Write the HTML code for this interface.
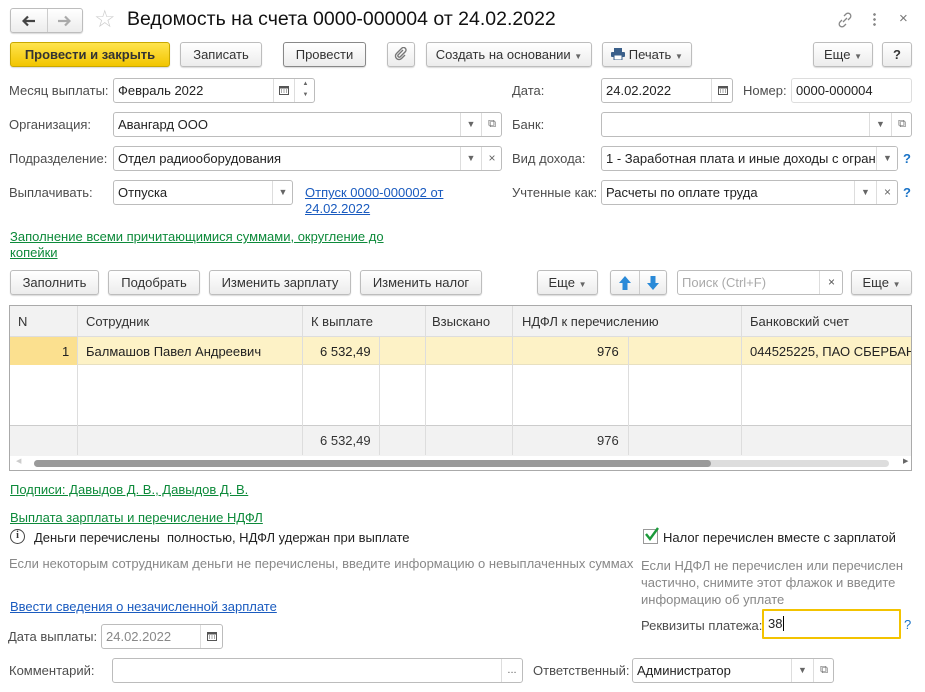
<!DOCTYPE html>
<html><head><meta charset="utf-8"><style>
*{box-sizing:border-box}
body{margin:0;width:925px;height:692px;background:#fff;font-family:"Liberation Sans",Arial,sans-serif;font-size:13px;color:#333;position:relative;overflow:hidden}
.a{position:absolute;white-space:nowrap}
.btn{position:absolute;height:25px;border:1px solid #bdbdbd;border-radius:3px;background:linear-gradient(#fff,#ececec);box-shadow:0 1px 1px rgba(0,0,0,.15);text-align:center;line-height:23px;color:#333;white-space:nowrap}
.inp{position:absolute;height:25px;border:1px solid #bcbcbc;border-radius:3px;background:#fff;line-height:23px;padding-left:4px;color:#222;white-space:nowrap;overflow:hidden}
.sb{position:absolute;top:0;bottom:0;border-left:1px solid #ddd;text-align:center;color:#666;font-size:9px;line-height:23px}
.sb svg{vertical-align:middle;margin-top:-2px}
.lbl{position:absolute;color:#4d4d4d;white-space:nowrap}
.q{position:absolute;color:#1a73c7;font-weight:bold}
.lnkg{position:absolute;color:#0d8a3a;text-decoration:underline;white-space:nowrap}
.lnkb{position:absolute;color:#1a5bbf;text-decoration:underline;white-space:nowrap}
.col{position:absolute;top:0;bottom:0;border-left:1px solid #ddd}
</style></head><body>
<!-- title bar -->
<div class="btn" style="left:10px;top:8px;width:73px;height:25px;padding:0">
<svg class="a" style="left:11px;top:6px" width="14" height="12" viewBox="0 0 14 12"><path d="M1 6h12M6 1.5L1.5 6 6 10.5" stroke="#444" stroke-width="2.2" fill="none"/></svg>
<span style="position:absolute;left:36px;top:0;bottom:0;border-left:1px solid #ccc"></span>
<svg class="a" style="left:46px;top:6px" width="14" height="12" viewBox="0 0 14 12"><path d="M1 6h12M8 1.5L12.5 6 8 10.5" stroke="#aaa" stroke-width="2.2" fill="none"/></svg>
</div>
<div class="a" style="left:94px;top:5px;font-size:24px;color:#ccc">☆</div>
<div class="a" style="left:127px;top:8px;font-size:19.5px;color:#111">Ведомость на счета 0000-000004 от 24.02.2022</div>
<svg class="a" style="left:836px;top:11px" width="18" height="18" viewBox="0 0 18 18" fill="none" stroke="#888" stroke-width="1.3"><path d="M7 11l4-4M8 5l2-2a2.8 2.8 0 014 4l-2 2M10 13l-2 2a2.8 2.8 0 01-4-4l2-2"/></svg>
<div class="a" style="left:873px;top:12px;width:3px;height:14px;background:radial-gradient(circle,#888 1.2px,transparent 1.5px) 0 0/3px 5px"></div>
<div class="a" style="left:899px;top:10px;font-size:15px;color:#777">×</div>
<!-- toolbar -->
<div class="btn" style="left:10px;top:42px;width:160px;background:linear-gradient(#ffe44d,#f2c500);border-color:#c9a800;font-weight:bold;color:#333">Провести и закрыть</div>
<div class="btn" style="left:180px;top:42px;width:82px">Записать</div>
<div class="btn" style="left:283px;top:42px;width:83px;border-color:#888">Провести</div>
<div class="btn" style="left:387px;top:42px;width:28px"><svg style="vertical-align:middle;margin-top:-3px" width="14" height="14" viewBox="0 0 14 14"><path d="M9 3L4 8a1.5 1.5 0 002 2l5.5-5.5a2.5 2.5 0 00-3.5-3.5L2.5 6.5a3.5 3.5 0 005 5L11 8" stroke="#777" stroke-width="1.4" fill="none"/></svg></div>
<div class="btn" style="left:426px;top:42px;width:166px">Создать на основании <span style="font-size:8px;color:#666">▼</span></div>
<div class="btn" style="left:602px;top:42px;width:90px"><svg style="vertical-align:middle;margin-top:-3px" width="14" height="12" viewBox="0 0 14 12"><rect x="3" y="0" width="8" height="4" fill="#3a5f8a"/><rect x="0" y="4" width="14" height="5" rx="1" fill="#3a5f8a"/><rect x="3" y="7" width="8" height="5" fill="#fff" stroke="#3a5f8a"/></svg> Печать <span style="font-size:8px;color:#666">▼</span></div>
<div class="btn" style="left:813px;top:42px;width:60px">Еще <span style="font-size:8px;color:#666">▼</span></div>
<div class="btn" style="left:882px;top:42px;width:30px;font-weight:bold">?</div>
<!-- row1 -->
<div class="lbl" style="left:9px;top:83px">Месяц выплаты:</div>
<div class="inp" style="left:113px;top:78px;width:202px">Февраль 2022<div class="sb" style="left:159px;width:21px"><svg width="10" height="10" viewBox="0 0 10 10"><rect x="0.5" y="1.5" width="9" height="8" fill="none" stroke="#555"/><rect x="0.5" y="1.5" width="9" height="2" fill="#555"/><path d="M2 5h1M4.5 5h1M7 5h1M2 7h1M4.5 7h1M7 7h1" stroke="#555"/></svg></div><div class="sb" style="left:180px;width:22px;line-height:11px;font-size:6px">▲<br>▼</div></div>
<div class="lbl" style="left:512px;top:83px">Дата:</div>
<div class="inp" style="left:601px;top:78px;width:132px">24.02.2022<div class="sb" style="left:109px;width:22px"><svg width="10" height="10" viewBox="0 0 10 10"><rect x="0.5" y="1.5" width="9" height="8" fill="none" stroke="#555"/><rect x="0.5" y="1.5" width="9" height="2" fill="#555"/><path d="M2 5h1M4.5 5h1M7 5h1M2 7h1M4.5 7h1M7 7h1" stroke="#555"/></svg></div></div>
<div class="lbl" style="left:743px;top:83px">Номер:</div>
<div class="inp" style="left:791px;top:78px;width:121px;border-color:#ddd">0000-000004</div>
<!-- row2 -->
<div class="lbl" style="left:9px;top:117px">Организация:</div>
<div class="inp" style="left:113px;top:112px;width:389px">Авангард ООО<div class="sb" style="left:346px;width:21px">▼</div><div class="sb" style="left:367px;width:21px;font-size:11px">⧉</div></div>
<div class="lbl" style="left:512px;top:117px">Банк:</div>
<div class="inp" style="left:601px;top:112px;width:311px"><div class="sb" style="left:267px;width:22px">▼</div><div class="sb" style="left:289px;width:21px;font-size:11px">⧉</div></div>
<!-- row3 -->
<div class="lbl" style="left:9px;top:151px">Подразделение:</div>
<div class="inp" style="left:113px;top:146px;width:389px">Отдел радиооборудования<div class="sb" style="left:346px;width:21px">▼</div><div class="sb" style="left:367px;width:21px;font-size:12px">×</div></div>
<div class="lbl" style="left:512px;top:151px">Вид дохода:</div>
<div class="inp" style="left:601px;top:146px;width:297px">1 - Заработная плата и иные доходы с огран<div class="sb" style="left:274px;width:22px;background:#fff">▼</div></div>
<div class="q" style="left:903px;top:151px">?</div>
<!-- row4 -->
<div class="lbl" style="left:9px;top:185px">Выплачивать:</div>
<div class="inp" style="left:113px;top:180px;width:180px">Отпуска<div class="sb" style="left:158px;width:21px">▼</div></div>
<div class="lnkb" style="left:305px;top:185px;line-height:16px">Отпуск 0000-000002 от<br>24.02.2022</div>
<div class="lbl" style="left:512px;top:185px">Учтенные как:</div>
<div class="inp" style="left:601px;top:180px;width:297px">Расчеты по оплате труда<div class="sb" style="left:252px;width:22px">▼</div><div class="sb" style="left:274px;width:22px;font-size:12px">×</div></div>
<div class="q" style="left:903px;top:185px">?</div>
<div class="lnkg" style="left:10px;top:229px;line-height:16px">Заполнение всеми причитающимися суммами, округление до<br>копейки</div>
<!-- table toolbar -->
<div class="btn" style="left:10px;top:270px;width:89px">Заполнить</div>
<div class="btn" style="left:108px;top:270px;width:92px">Подобрать</div>
<div class="btn" style="left:209px;top:270px;width:142px">Изменить зарплату</div>
<div class="btn" style="left:360px;top:270px;width:122px">Изменить налог</div>
<div class="btn" style="left:537px;top:270px;width:61px">Еще <span style="font-size:8px;color:#666">▼</span></div>
<div class="btn" style="left:610px;top:270px;width:57px;padding:0">
<svg class="a" style="left:8px;top:5px" width="12" height="14" viewBox="0 0 12 14"><path d="M6 0L12 7H8.5V14h-5V7H0z" fill="#2a8ad8"/></svg>
<span style="position:absolute;left:28px;top:0;bottom:0;border-left:1px solid #ccc"></span>
<svg class="a" style="left:36px;top:5px" width="12" height="14" viewBox="0 0 12 14"><path d="M6 14L12 7H8.5V0h-5V7H0z" fill="#2a8ad8"/></svg>
</div>
<div class="inp" style="left:677px;top:270px;width:166px;color:#aaa">Поиск (Ctrl+F)<div class="sb" style="left:141px;width:24px;font-size:12px;color:#555">×</div></div>
<div class="btn" style="left:851px;top:270px;width:61px">Еще <span style="font-size:8px;color:#666">▼</span></div>
<!-- table -->
<div class="a" style="left:9px;top:305px;width:903px;height:166px;border:1px solid #aaa;overflow:hidden">
 <div class="a" style="left:0;top:0;width:903px;height:31px;background:#f2f2f2;border-bottom:1px solid #ddd"></div>
 <div class="a" style="left:0;top:31px;width:903px;height:28px;background:#fdf2c6;border-bottom:1px solid #e8e0c0"></div>
 <div class="a" style="left:0;top:31px;width:67px;height:28px;background:#fbe08f"></div>
 <div class="a" style="left:0;top:119px;width:903px;height:31px;background:#f2f2f2;border-top:1px solid #ccc"></div>
 <div class="col" style="left:67px;bottom:15px"></div><div class="col" style="left:292px;bottom:15px"></div>
 <div class="col" style="left:369px;top:31px;bottom:15px"></div><div class="col" style="left:415px;bottom:15px"></div>
 <div class="col" style="left:502px;bottom:15px"></div><div class="col" style="left:618px;top:31px;bottom:15px"></div><div class="col" style="left:731px;bottom:15px"></div>
 <div class="a" style="left:8px;top:8px">N</div>
 <div class="a" style="left:76px;top:8px">Сотрудник</div>
 <div class="a" style="left:301px;top:8px">К выплате</div>
 <div class="a" style="left:422px;top:8px">Взыскано</div>
 <div class="a" style="left:512px;top:8px">НДФЛ к перечислению</div>
 <div class="a" style="left:740px;top:8px">Банковский счет</div>
 <div class="a" style="left:52px;top:38px;color:#222">1</div>
 <div class="a" style="left:76px;top:38px;color:#222">Балмашов Павел Андреевич</div>
 <div class="a" style="left:310px;top:38px;color:#222">6 532,49</div>
 <div class="a" style="left:587px;top:38px;color:#222">976</div>
 <div class="a" style="left:740px;top:38px;color:#222">044525225, ПАО СБЕРБАНК</div>
 <div class="a" style="left:310px;top:127px;color:#333">6 532,49</div>
 <div class="a" style="left:587px;top:127px;color:#333">976</div>
 <div class="a" style="left:0;top:150px;width:903px;height:15px;background:#fff"></div>
 <div class="a" style="left:24px;top:154px;width:855px;height:7px;border-radius:4px;background:#ddd"></div>
 <div class="a" style="left:24px;top:154px;width:677px;height:7px;border-radius:4px;background:#9a9a9a"></div>
 <div class="a" style="left:893px;top:151px;font-size:7px;color:#666">▶</div>
 <div class="a" style="left:6px;top:151px;font-size:7px;color:#ccc">◀</div>
</div>
<!-- bottom -->
<div class="lnkg" style="left:10px;top:482px">Подписи: Давыдов Д. В., Давыдов Д. В.</div>
<div class="lnkg" style="left:10px;top:510px">Выплата зарплаты и перечисление НДФЛ</div>
<div class="a" style="left:10px;top:529px;width:15px;height:15px;border:1.5px solid #444;border-radius:50%;font-size:10px;text-align:center;line-height:12px;font-weight:bold;font-family:'Liberation Serif',serif;color:#333">i</div>
<div class="a" style="left:34px;top:530px;color:#222">Деньги перечислены&nbsp; полностью, НДФЛ удержан при выплате</div>
<div class="a" style="left:9px;top:556px;color:#888">Если некоторым сотрудникам деньги не перечислены, введите информацию о невыплаченных суммах</div>
<div class="a" style="left:643px;top:529px;width:15px;height:15px;border:1px solid #999;background:#fff"></div>
<svg class="a" style="left:644px;top:527px" width="15" height="15" viewBox="0 0 15 15"><path d="M2 7l4 5 8-11" stroke="#1b9a3a" stroke-width="2.4" fill="none"/></svg>
<div class="a" style="left:663px;top:530px;color:#222">Налог перечислен вместе с зарплатой</div>
<div class="a" style="left:641px;top:557px;color:#888;line-height:17px">Если НДФЛ не перечислен или перечислен<br>частично, снимите этот флажок и введите<br>информацию об уплате</div>
<div class="lnkb" style="left:10px;top:599px">Ввести сведения о незачисленной зарплате</div>
<div class="lbl" style="left:8px;top:629px">Дата выплаты:</div>
<div class="inp" style="left:101px;top:624px;width:122px;color:#888">24.02.2022<div class="sb" style="left:98px;width:22px"><svg width="10" height="10" viewBox="0 0 10 10"><rect x="0.5" y="1.5" width="9" height="8" fill="none" stroke="#555"/><rect x="0.5" y="1.5" width="9" height="2" fill="#555"/><path d="M2 5h1M4.5 5h1M7 5h1M2 7h1M4.5 7h1M7 7h1" stroke="#555"/></svg></div></div>
<div class="lbl" style="left:641px;top:618px">Реквизиты платежа:</div>
<div class="inp" style="left:762px;top:609px;width:139px;height:30px;border:2px solid #f3c300;border-radius:1px;line-height:26px;padding-left:4px">38<span style="border-left:1px solid #000;margin-left:1px"></span></div>
<div class="q" style="left:904px;top:617px;font-weight:normal">?</div>
<div class="lbl" style="left:9px;top:663px">Комментарий:</div>
<div class="inp" style="left:112px;top:658px;width:411px"><div class="sb" style="left:388px;width:21px;font-size:11px">...</div></div>
<div class="lbl" style="left:533px;top:663px">Ответственный:</div>
<div class="inp" style="left:632px;top:658px;width:202px">Администратор<div class="sb" style="left:158px;width:22px">▼</div><div class="sb" style="left:180px;width:21px;font-size:11px">⧉</div></div>
</body></html>
